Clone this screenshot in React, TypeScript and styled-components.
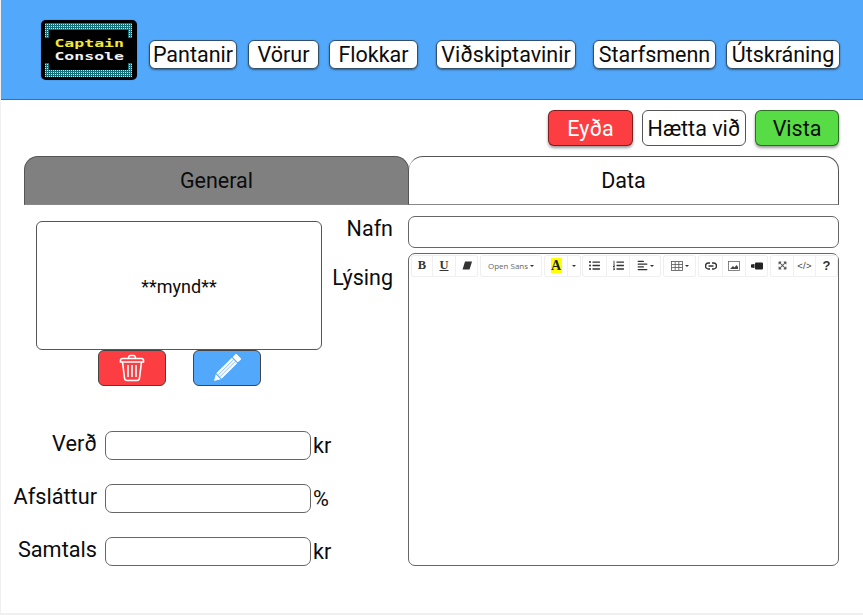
import React from 'react'
import styled, { createGlobalStyle } from 'styled-components'
import { FaAlignLeft, FaExpandArrowsAlt, FaListOl, FaListUl } from 'react-icons/fa'

const GlobalStyle = createGlobalStyle`
  html, body {
    margin: 0;
    padding: 0;
    background: #ffffff;
  }
  body {
    font-family: Roboto, "Liberation Sans", sans-serif;
    color: #0c0c0c;
  }
`

const Page = styled.div`
  width: 863px;
  height: 615px;
  box-sizing: border-box;
  overflow: hidden;
  border-left: 1px solid #f0f0f0;
  border-bottom: 2px solid #f0f0f0;
`

const Header = styled.header`
  height: 100px;
  box-sizing: border-box;
  background: #52a8fb;
  border-bottom: 1px solid #3a6f9f;
  display: flex;
  align-items: flex-start;
  padding: 20px 0 0 40px;
`

const Logo = styled.div`
  width: 96px;
  height: 60px;
  flex: none;
  position: relative;
  background: #000000;
  border-radius: 5px;
  box-shadow: 0 0 1px rgba(0, 0, 0, 0.5);
  display: flex;
  flex-direction: column;
  align-items: center;
  justify-content: center;

  svg {
    position: absolute;
    inset: 0;
  }
`

const LogoLine = styled.span<{ $color: string }>`
  display: block;
  font-family: "DejaVu Sans Mono", monospace;
  font-size: 11px;
  font-weight: 700;
  line-height: 13px;
  color: ${(p) => p.$color};
  transform: scaleX(1.5);
`

const Nav = styled.nav`
  display: flex;
  margin: 20px 0 0 12px;
`

const NavButton = styled.button<{ $width: number; $after: number }>`
  width: ${(p) => p.$width}px;
  margin-right: ${(p) => p.$after}px;
  height: 29px;
  box-sizing: border-box;
  padding: 0;
  background: #ffffff;
  border: 1px solid #33506b;
  border-radius: 6px;
  box-shadow: 0 1px 2px rgba(0, 0, 0, 0.45);
  font-family: inherit;
  font-size: 21.5px;
  line-height: 26px;
  color: #0c0c0c;
  white-space: nowrap;
`

const Actions = styled.div`
  display: flex;
  justify-content: flex-end;
  gap: 9px;
  padding: 10px 24px 0 0;
`

const ActionButton = styled.button<{ $bg: string; $fg: string; $width: number; $flat?: boolean }>`
  width: ${(p) => p.$width}px;
  height: 36px;
  box-sizing: border-box;
  padding: 0;
  background: ${(p) => p.$bg};
  color: ${(p) => p.$fg};
  border: 1px solid ${(p) => (p.$flat ? '#555555' : 'rgba(0, 0, 0, 0.5)')};
  border-radius: 6px;
  box-shadow: ${(p) => (p.$flat ? 'none' : '0 2px 3px rgba(0, 0, 0, 0.4)')};
  font-family: inherit;
  font-size: 21.5px;
  white-space: nowrap;
`

const Tabs = styled.div`
  display: flex;
  margin: 10px 23px 0 23px;
  height: 49px;
`

const Tab = styled.div<{ $active?: boolean; $width: number }>`
  width: ${(p) => p.$width}px;
  box-sizing: border-box;
  display: flex;
  align-items: center;
  justify-content: center;
  font-size: 21.5px;
  background: ${(p) => (p.$active ? '#808080' : '#ffffff')};
  border: 1px solid #555555;
  border-bottom-color: #888888;
  border-left-width: ${(p) => (p.$active ? 1 : 0)}px;
  border-radius: 14px 14px 0 0;
`

const Body = styled.div`
  display: grid;
  grid-template-columns: 407px 431px;
  margin-top: 11px;
`

const LeftColumn = styled.div`
  padding-left: 35px;
`

const ImageBox = styled.div`
  width: 286px;
  height: 129px;
  margin-top: 5px;
  box-sizing: border-box;
  border: 1px solid #555555;
  border-radius: 6px;
  display: flex;
  align-items: center;
  justify-content: center;
  font-size: 18px;
  padding-top: 2px;
`

const ImageButtons = styled.div`
  display: flex;
  gap: 27px;
  padding-left: 62px;
`

const IconButton = styled.button<{ $bg: string }>`
  width: 68px;
  height: 36px;
  box-sizing: border-box;
  padding: 0;
  display: flex;
  align-items: center;
  justify-content: center;
  background: ${(p) => p.$bg};
  border: 1px solid #444444;
  border-radius: 6px;
`

const PriceFields = styled.div`
  display: flex;
  flex-direction: column;
  gap: 24px;
  margin: 45px 0 0 -35px;
`

const PriceRow = styled.div`
  display: flex;
  align-items: center;
  height: 29px;
`

const PriceLabel = styled.label`
  width: 96px;
  text-align: right;
  font-size: 21.7px;
  line-height: 24px;
  margin-right: 8px;
  position: relative;
  top: -2px;
`

const PriceInput = styled.div`
  width: 206px;
  height: 29px;
  box-sizing: border-box;
  border: 1px solid #666666;
  border-radius: 7px;
  background: #ffffff;
`

const Unit = styled.span`
  font-size: 21.7px;
  margin-left: 2px;
`

const RightColumn = styled.div`
  display: grid;
  grid-template-columns: 431px;
  row-gap: 4px;
`

const FieldWrap = styled.div`
  position: relative;
`

const SideLabel = styled.label<{ $top: number }>`
  position: absolute;
  right: 446px;
  top: ${(p) => p.$top}px;
  font-size: 21.5px;
  line-height: 24px;
  white-space: nowrap;
`

const NameInput = styled.div`
  height: 32px;
  box-sizing: border-box;
  border: 1px solid #666666;
  border-radius: 7px;
`

const Editor = styled.div`
  height: 313px;
  box-sizing: border-box;
  border: 1px solid #666666;
  border-radius: 7px;
`

const Toolbar = styled.div`
  display: flex;
  padding: 2px 0 0 3px;
  height: 22px;
  box-sizing: border-box;
`

const ToolGroup = styled.div<{ $gap?: number }>`
  display: flex;
  height: 20px;
  margin-right: ${(p) => p.$gap ?? 4}px;
  border-radius: 2px;
  box-shadow: 0 0 0 1px #efefef;
`

const Tool = styled.div<{ $width: number; $color?: string }>`
  width: ${(p) => p.$width}px;
  display: flex;
  align-items: center;
  justify-content: center;
  gap: 2px;
  box-sizing: border-box;
  color: ${(p) => p.$color ?? '#333333'};
  font-size: 8px;
  white-space: nowrap;
  font-family: "Open Sans", sans-serif;

  & + & {
    border-left: 1px solid #f0f0f0;
  }
`

const SerifGlyph = styled.span<{ $underline?: boolean }>`
  font-family: "Liberation Serif", serif;
  font-size: 12.5px;
  font-weight: 700;
  line-height: 13px;
  color: #333333;
  text-decoration: ${(p) => (p.$underline ? 'underline' : 'none')};
`

const CodeGlyph = styled.span`
  font-family: "Liberation Sans", sans-serif;
  font-size: 9.5px;
  letter-spacing: 0.2px;
  color: #444444;
`

const HelpGlyph = styled.span`
  font-family: "Liberation Sans", sans-serif;
  font-size: 13px;
  font-weight: 700;
  color: #333333;
`

const Caret = styled.span`
  width: 0;
  height: 0;
  border-left: 2px solid transparent;
  border-right: 2px solid transparent;
  border-top: 2px solid #333333;
`

const ColorLetter = styled.span`
  width: 11px;
  height: 15px;
  display: flex;
  align-items: center;
  justify-content: center;
  background: #ffff00;
  font-family: "Liberation Serif", serif;
  font-size: 14px;
  font-weight: 700;
  color: #222222;
`

const TrashIcon = () => (
  <svg width="26" height="28" viewBox="0 0 26 28" fill="none" stroke="#ffffff" strokeWidth="1.6">
    <path d="M1.500 6.500c0-1.400 1-2 2-2h19c1 0 2 .6 2 2v1.500h-23z" />
    <path d="M9.500 4.500c0-2 1-3 2-3h3c1 0 2 1 2 3" />
    <path d="M3.500 8l2 16c.2 1.600 1 2.500 2.500 2.500h10c1.500 0 2.300-.9 2.500-2.500l2-16" />
    <path d="M9 11v12M13 11v12M17 11v12" />
  </svg>
)

const PencilIcon = () => (
  <svg width="28" height="28" viewBox="0 0 28 28">
    <g transform="translate(1 27) rotate(-45)" fill="#ffffff">
      <polygon points="0,0 6,-3.500 6,3.500" />
      <rect x="7" y="-3.800" width="22" height="7.600" />
      <rect x="30" y="-3.800" width="5" height="7.600" rx="1" />
      <path d="M7 -1.200H29M7 1.200H29" stroke="#52a8fb" strokeWidth="0.7" />
    </g>
  </svg>
)

const EraserIcon = () => (
  <svg width="10" height="9" viewBox="0 0 10 9" fill="#333333">
    <path d="M3 0.500h7l-2.500 8h-7z" />
  </svg>
)

const TableIcon = () => (
  <svg width="12" height="10" viewBox="0 0 12 10" fill="none" stroke="#555555" strokeWidth="0.8">
    <rect x="0.500" y="0.500" width="11" height="9" />
    <path d="M4.200 0.500v9M7.800 0.500v9M0.500 3.500h11M0.500 6.500h11" />
  </svg>
)

const LinkIcon = () => (
  <svg width="12" height="8" viewBox="0 0 12 8" fill="none" stroke="#333333" strokeWidth="1.400">
    <path d="M5 1H3.500a3 3 0 0 0 0 6H5M7 1h1.500a3 3 0 0 1 0 6H7M3.500 4h5" />
  </svg>
)

const PictureIcon = () => (
  <svg width="12" height="10" viewBox="0 0 12 10">
    <rect x="0.500" y="0.500" width="11" height="9" fill="none" stroke="#666666" strokeWidth="0.8" />
    <path d="M2 8l3-3 1.500 1.500L8.500 4 10 6v2z" fill="#444444" />
  </svg>
)

const VideoIcon = () => (
  <svg width="12" height="8" viewBox="0 0 12 8" fill="#222222">
    <rect x="4" y="0.500" width="8" height="7" rx="1" />
    <path d="M0 2.500L3.500 2v4L0 5.500z" />
  </svg>
)

const LogoFrame = () => (
  <svg width="96" height="60" viewBox="0 0 96 60">
    <defs>
      <pattern id="dots" width="2" height="2" patternUnits="userSpaceOnUse">
        <rect width="2" height="2" fill="#14707a" />
        <rect width="1" height="1" fill="#b4eaee" />
      </pattern>
    </defs>
    <g fill="url(#dots)">
      <rect x="4" y="3" width="87" height="7" />
      <rect x="4" y="10" width="4" height="8" />
      <rect x="87" y="10" width="4" height="8" />
      <rect x="4" y="50" width="87" height="7" />
      <rect x="4" y="43" width="4" height="7" />
      <rect x="87" y="43" width="4" height="7" />
    </g>
  </svg>
)

const navItems = [
  { label: 'Pantanir', width: 88, after: 11 },
  { label: 'Vörur', width: 71, after: 10 },
  { label: 'Flokkar', width: 89, after: 18 },
  { label: 'Viðskiptavinir', width: 140, after: 17 },
  { label: 'Starfsmenn', width: 123, after: 10 },
  { label: 'Útskráning', width: 114, after: 0 },
]

const App = () => {
  return (
    <Page>
      <GlobalStyle />
      <Header>
        <Logo>
          <LogoFrame />
          <LogoLine $color="#f5e92f">Captain</LogoLine>
          <LogoLine $color="#f2f2f2">Console</LogoLine>
        </Logo>
        <Nav>
          {navItems.map((item) => (
            <NavButton key={item.label} $width={item.width} $after={item.after}>
              {item.label}
            </NavButton>
          ))}
        </Nav>
      </Header>

      <Actions>
        <ActionButton $bg="#fc3d42" $fg="#ffffff" $width={85}>
          Eyða
        </ActionButton>
        <ActionButton $bg="#ffffff" $fg="#0c0c0c" $width={104} $flat>
          Hætta við
        </ActionButton>
        <ActionButton $bg="#58dc46" $fg="#0c0c0c" $width={84}>
          Vista
        </ActionButton>
      </Actions>

      <Tabs>
        <Tab $active $width={385}>
          General
        </Tab>
        <Tab $width={430}>Data</Tab>
      </Tabs>

      <Body>
        <LeftColumn>
          <ImageBox>**mynd**</ImageBox>
          <ImageButtons>
            <IconButton $bg="#fc3d42">
              <TrashIcon />
            </IconButton>
            <IconButton $bg="#52a8fb">
              <PencilIcon />
            </IconButton>
          </ImageButtons>
          <PriceFields>
            <PriceRow>
              <PriceLabel>Verð</PriceLabel>
              <PriceInput />
              <Unit>kr</Unit>
            </PriceRow>
            <PriceRow>
              <PriceLabel>Afsláttur</PriceLabel>
              <PriceInput />
              <Unit>%</Unit>
            </PriceRow>
            <PriceRow>
              <PriceLabel>Samtals</PriceLabel>
              <PriceInput />
              <Unit>kr</Unit>
            </PriceRow>
          </PriceFields>
        </LeftColumn>

        <RightColumn>
          <FieldWrap>
            <SideLabel $top={1}>Nafn</SideLabel>
            <NameInput />
          </FieldWrap>
          <FieldWrap>
            <SideLabel $top={13}>Lýsing</SideLabel>
            <Editor>
              <Toolbar>
                <ToolGroup>
                  <Tool $width={20}><SerifGlyph>B</SerifGlyph></Tool>
                  <Tool $width={23}><SerifGlyph $underline>U</SerifGlyph></Tool>
                  <Tool $width={22}><EraserIcon /></Tool>
                </ToolGroup>
                <ToolGroup>
                  <Tool $width={60} $color="#666666">Open Sans <Caret /></Tool>
                </ToolGroup>
                <ToolGroup $gap={3}>
                  <Tool $width={22}><ColorLetter>A</ColorLetter></Tool>
                  <Tool $width={13}><Caret /></Tool>
                </ToolGroup>
                <ToolGroup>
                  <Tool $width={23}><FaListUl size={11} /></Tool>
                  <Tool $width={23}><FaListOl size={11} /></Tool>
                  <Tool $width={31}><FaAlignLeft size={11} /><Caret /></Tool>
                </ToolGroup>
                <ToolGroup>
                  <Tool $width={31}><TableIcon /><Caret /></Tool>
                </ToolGroup>
                <ToolGroup>
                  <Tool $width={23}><LinkIcon /></Tool>
                  <Tool $width={23}><PictureIcon /></Tool>
                  <Tool $width={22}><VideoIcon /></Tool>
                </ToolGroup>
                <ToolGroup $gap={0}>
                  <Tool $width={22} $color="#555555"><FaExpandArrowsAlt size={9} /></Tool>
                  <Tool $width={22}><CodeGlyph>&lt;/&gt;</CodeGlyph></Tool>
                  <Tool $width={22}><HelpGlyph>?</HelpGlyph></Tool>
                </ToolGroup>
              </Toolbar>
            </Editor>
          </FieldWrap>
        </RightColumn>
      </Body>
    </Page>
  )
}

export default App
